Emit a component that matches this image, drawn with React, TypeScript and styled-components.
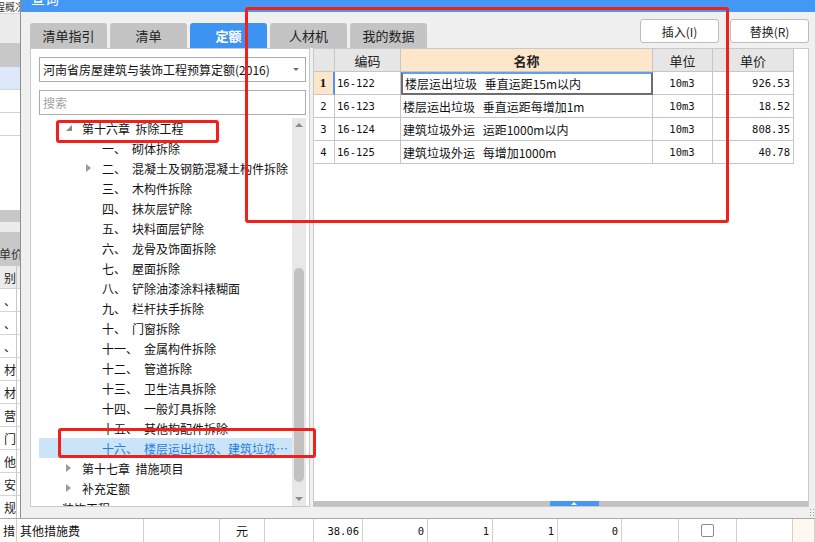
import React from "react";
import styled, { createGlobalStyle, css } from "styled-components";

const GlobalStyle = createGlobalStyle`
  html, body {
    margin: 0;
    padding: 0;
  }
  body {
    font-family: "Noto Sans CJK SC", "Noto Sans", sans-serif;
    font-size: 12px;
    color: #222;
    background: #fff;
  }
  * {
    box-sizing: border-box;
  }
`;

const Screen = styled.div`
  width: 815px;
  height: 542px;
  position: relative;
  overflow: hidden;
  display: grid;
  grid-template-columns: 20px 1fr;
  grid-template-rows: 518px 24px;
`;

/* ---- underlying app, left strip ---- */

const Strip = styled.div`
  display: flex;
  flex-direction: column;
  overflow: hidden;
  background: #fff;
`;

const tones = {
  white: "#ffffff",
  light: "#ececec",
  gray: "#c8c8c8",
  blue: "#dde9fb",
};

const StripBand = styled.div<{ $h: number; $tone: keyof typeof tones; $line?: boolean }>`
  height: ${(p) => p.$h}px;
  flex-shrink: 0;
  background: ${(p) => tones[p.$tone]};
  border-bottom: ${(p) => (p.$line ? "1px solid #d4d4d4" : "none")};
  font-size: 12px;
  line-height: ${(p) => p.$h}px;
  white-space: nowrap;
  overflow: hidden;
`;

const StripTitle = styled.span<{ $big?: boolean }>`
  display: block;
  margin-left: ${(p) => (p.$big ? -1 : -5)}px;
  font-size: ${(p) => (p.$big ? 12 : 10)}px;
  line-height: ${(p) => (p.$big ? 44 : 13)}px;
  color: #333;
`;

const StripCell = styled.div<{ $tone?: keyof typeof tones }>`
  width: 17px;
  height: 100%;
  border-right: 1px solid #c8c8c8;
  background: ${(p) => tones[p.$tone ?? "white"]};
  overflow: hidden;
  text-align: right;
  font-size: 12px;
  white-space: nowrap;
`;

/* ---- dialog ---- */

const Dialog = styled.div`
  display: flex;
  flex-direction: column;
  border-left: 1px solid #8f8f8f;
  background: #f0f0f0;
  min-width: 0;
  position: relative;
`;

const TitleBar = styled.div`
  height: 12px;
  flex-shrink: 0;
  background: #4597f5;
  overflow: hidden;
  padding-left: 10px;
`;

const TitleText = styled.span`
  display: block;
  margin-top: -9px;
  font-size: 14px;
  line-height: 15px;
  color: #fff;
`;

const Body = styled.div`
  flex: 1;
  display: flex;
  flex-direction: column;
  padding: 0 6px 0 9px;
  position: relative;
`;

const TopRow = styled.div`
  height: 36px;
  display: flex;
  justify-content: space-between;
  align-items: flex-end;
`;

const Tabs = styled.div`
  display: flex;
  gap: 3px;
`;

const Tab = styled.div<{ $active?: boolean }>`
  width: 77px;
  height: 25px;
  border-radius: 3px 3px 0 0;
  display: flex;
  align-items: center;
  justify-content: center;
  font-size: 13px;
  background: ${(p) => (p.$active ? "#3d93f2" : "#c4c4c4")};
  color: ${(p) => (p.$active ? "#fff" : "#222")};
  font-weight: ${(p) => (p.$active ? 700 : 400)};
`;

const Actions = styled.div`
  align-self: flex-start;
  margin-top: 7px;
  display: flex;
  gap: 11px;
`;

const ActionButton = styled.button`
  width: 79px;
  height: 24px;
  border: 1px solid #bcbcbc;
  border-radius: 3px;
  background: #fff;
  font-family: "Noto Sans CJK SC", sans-serif;
  font-size: 12px;
  color: #222;
  padding: 0;
`;

const Panels = styled.div`
  height: 459px;
  display: flex;
  gap: 3px;
`;

const Footer = styled.div`
  flex: 1;
  position: relative;
`;

const Grip = styled.div`
  position: absolute;
  right: -6px;
  bottom: 1px;
  width: 6px;
  height: 9px;
  background-image: radial-gradient(circle, #9a9a9a 0.8px, transparent 1px);
  background-size: 3px 3px;
`;

/* ---- tree panel ---- */

const TreePanel = styled.div`
  width: 280px;
  flex-shrink: 0;
  background: #fff;
  border: 1px solid #c9c9c9;
  display: flex;
  flex-direction: column;
  padding: 8px 3px 0 8px;
`;

const Field = styled.div<{ $placeholder?: boolean }>`
  height: 25px;
  flex-shrink: 0;
  border: 1px solid #ababab;
  display: flex;
  align-items: center;
  justify-content: space-between;
  padding: 0 6px 0 3px;
  font-size: 12px;
  color: ${(p) => (p.$placeholder ? "#a3a3a3" : "#111")};
  & + & {
    margin-top: 8px;
  }
`;

const DownCaret = styled.span`
  border-left: 3px solid transparent;
  border-right: 3px solid transparent;
  border-top: 3px solid #707070;
`;

const TreeArea = styled.div`
  margin-top: 3px;
  flex: 1;
  display: flex;
  min-height: 0;
`;

const TreeList = styled.div`
  flex: 1;
  overflow: hidden;
  min-width: 0;
`;

const TreeRow = styled.div<{ $level: number; $selected?: boolean }>`
  height: 20px;
  display: flex;
  align-items: center;
  padding-left: ${(p) => 3 + p.$level * 20}px;
  white-space: nowrap;
  font-size: 12px;
  color: ${(p) => (p.$selected ? "#1f7fe3" : "#111")};
  background: ${(p) => (p.$selected ? "#cce4f8" : "transparent")};
`;

const CaretSlot = styled.span`
  width: 20px;
  flex-shrink: 0;
  display: flex;
  align-items: center;
  padding-left: 4px;
`;

const ItemNum = styled.span`
  margin-right: 6px;
`;

const ItemText = styled.span`
  white-space: pre;
`;

const ScrollTrack = styled.div`
  width: 14px;
  flex-shrink: 0;
  background: #e8e8e8;
  display: flex;
  flex-direction: column;
  align-items: center;
`;

const ScrollArrow = styled.div<{ $dir: "up" | "down" }>`
  height: 14px;
  width: 100%;
  display: flex;
  align-items: center;
  justify-content: center;
  ${(p) =>
    p.$dir === "down" &&
    css`
      margin-top: auto;
    `}
  &::after {
    content: "";
    border-left: 4px solid transparent;
    border-right: 4px solid transparent;
    ${(p) =>
      p.$dir === "up"
        ? css`
            border-bottom: 4px solid #8c8c8c;
          `
        : css`
            border-top: 4px solid #8c8c8c;
          `}
  }
`;

const ScrollThumb = styled.div<{ $offset: number; $size: number }>`
  width: 10px;
  border-radius: 5px;
  background: #c1c1c1;
  margin-top: ${(p) => p.$offset}px;
  height: ${(p) => p.$size}px;
  flex-shrink: 0;
`;

/* ---- table panel ---- */

const TablePanel = styled.div`
  flex: 1;
  background: #fff;
  border: 1px solid #c9c9c9;
  display: flex;
  flex-direction: column;
`;

const Grid = styled.div`
  display: grid;
  grid-template-columns: 21px 66px 252px 60px 81px;
  grid-auto-rows: 23px;
`;

const HeadCell = styled.div<{ $accent?: boolean }>`
  background: ${(p) => (p.$accent ? "#fde6c9" : "#e6e6e6")};
  border-right: 1px solid #c6c6c6;
  border-bottom: 1px solid #c6c6c6;
  display: flex;
  align-items: center;
  justify-content: center;
  font-size: 13px;
  font-weight: ${(p) => (p.$accent ? 700 : 400)};
  color: #222;
`;

const Cell = styled.div<{
  $align?: "left" | "center" | "right";
  $mono?: boolean;
  $marker?: boolean;
  $focus?: boolean;
}>`
  border-right: 1px solid #c6c6c6;
  border-bottom: 1px solid #c6c6c6;
  display: flex;
  align-items: center;
  justify-content: ${(p) =>
    p.$align === "right" ? "flex-end" : p.$align === "center" ? "center" : "flex-start"};
  padding: 0 3px 0 2px;
  white-space: nowrap;
  overflow: hidden;
  font-size: 12px;
  word-spacing: 5px;
  color: #111;
  ${(p) =>
    p.$mono &&
    css`
      font-family: "DejaVu Sans Mono", "Liberation Mono", monospace;
      font-size: 10.5px;
      word-spacing: 0;
    `}
  ${(p) =>
    p.$marker &&
    css`
      background: #fde6c9;
      font-weight: 700;
      font-family: "Liberation Serif", serif;
      font-size: 13px;
      border-right: 2px solid #4a94ec;
    `}
  ${(p) =>
    p.$focus &&
    css`
      border: 2px solid #6e6e6e;
      border-top-color: #62a0ea;
    `}
`;

const Filler = styled.div`
  flex: 1;
`;

const HScroll = styled.div`
  height: 5px;
  background: #c2c2c2;
  display: flex;
  justify-content: center;
`;

const SplitHandle = styled.div`
  width: 49px;
  margin-left: 26px;
  background: #4597f5;
  display: flex;
  align-items: center;
  justify-content: center;
  &::after {
    content: "";
    border-left: 3px solid transparent;
    border-right: 3px solid transparent;
    border-bottom: 3px solid #fff;
  }
`;

/* ---- underlying app, bottom row ---- */

const BottomRow = styled.div`
  grid-column: 1 / -1;
  display: flex;
  border-top: 1px solid #a9a9a9;
  background: #fff;
`;

const BCell = styled.div<{ $w?: number; $align?: "left" | "center" | "right"; $mono?: boolean; $tint?: boolean }>`
  ${(p) =>
    p.$w
      ? css`
          width: ${p.$w}px;
          flex-shrink: 0;
        `
      : css`
          flex: 1;
        `}
  border-right: 1px solid #d0d0d0;
  background: ${(p) => (p.$tint ? "#fff8f0" : "#fff")};
  display: flex;
  align-items: center;
  justify-content: ${(p) =>
    p.$align === "right" ? "flex-end" : p.$align === "center" ? "center" : "flex-start"};
  padding: 0 3px;
  white-space: nowrap;
  overflow: hidden;
  font-size: 12px;
  color: #111;
  ${(p) =>
    p.$mono &&
    css`
      font-family: "DejaVu Sans Mono", "Liberation Mono", monospace;
      font-size: 10.5px;
    `}
`;

const CheckBox = styled.span`
  width: 13px;
  height: 13px;
  border: 1px solid #8a8a8a;
  border-radius: 2px;
  background: #fff;
`;

/* ---- annotations ---- */

const Mark = styled.div<{ $x: number; $y: number; $w: number; $h: number }>`
  position: absolute;
  left: ${(p) => p.$x}px;
  top: ${(p) => p.$y}px;
  width: ${(p) => p.$w}px;
  height: ${(p) => p.$h}px;
  border: 3px solid #f2201b;
  border-radius: 3px;
  pointer-events: none;
`;

type Caret = "open" | "closed" | undefined;

const CaretIcon = ({ kind }: { kind: Caret }) => {
  if (kind === "open")
    return (
      <svg width="6" height="6" viewBox="0 0 6 6">
        <path d="M6 0 L6 6 L0 6 Z" fill="#8a8a8a" />
      </svg>
    );
  if (kind === "closed")
    return (
      <svg width="5" height="8" viewBox="0 0 5 8">
        <path d="M0 0 L5 4 L0 8 Z" fill="#9a9a9a" />
      </svg>
    );
  return null;
};

type TreeItem = { level: number; num?: string; text: string; caret?: Caret; selected?: boolean };

const tree: TreeItem[] = [
  { level: 1, caret: "open", text: "第十六章  拆除工程" },
  { level: 2, num: "一", text: "砌体拆除" },
  { level: 2, num: "二", text: "混凝土及钢筋混凝土构件拆除", caret: "closed" },
  { level: 2, num: "三", text: "木构件拆除" },
  { level: 2, num: "四", text: "抹灰层铲除" },
  { level: 2, num: "五", text: "块料面层铲除" },
  { level: 2, num: "六", text: "龙骨及饰面拆除" },
  { level: 2, num: "七", text: "屋面拆除" },
  { level: 2, num: "八", text: "铲除油漆涂料裱糊面" },
  { level: 2, num: "九", text: "栏杆扶手拆除" },
  { level: 2, num: "十", text: "门窗拆除" },
  { level: 2, num: "十一", text: "金属构件拆除" },
  { level: 2, num: "十二", text: "管道拆除" },
  { level: 2, num: "十三", text: "卫生洁具拆除" },
  { level: 2, num: "十四", text: "一般灯具拆除" },
  { level: 2, num: "十五", text: "其他构配件拆除" },
  { level: 2, num: "十六", text: "楼层运出垃圾、建筑垃圾…", selected: true },
  { level: 1, caret: "closed", text: "第十七章  措施项目" },
  { level: 1, caret: "closed", text: "补充定额" },
  { level: 0, text: "装饰工程" },
];

const rows = [
  { code: "16-122", name: "楼层运出垃圾 垂直运距15m以内", unit: "10m3", price: "926.53" },
  { code: "16-123", name: "楼层运出垃圾 垂直运距每增加1m", unit: "10m3", price: "18.52" },
  { code: "16-124", name: "建筑垃圾外运 运距1000m以内", unit: "10m3", price: "808.35" },
  { code: "16-125", name: "建筑垃圾外运 每增加1000m", unit: "10m3", price: "40.78" },
];

const stripRows = ["、", "、", "、", "材", "材", "营", "门", "他", "安", "规"];

export default function App() {
  return (
    <>
      <GlobalStyle />
      <Screen>
        <Strip>
          <StripBand $h={14} $tone="white" $line>
            <StripTitle>程概况</StripTitle>
          </StripBand>
          <StripBand $h={29} $tone="light" />
          <StripBand $h={24} $tone="gray" />
          <StripBand $h={23} $tone="blue" $line />
          <StripBand $h={23} $tone="white" $line />
          <StripBand $h={23} $tone="white" $line />
          <StripBand $h={74} $tone="white" />
          <StripBand $h={12} $tone="gray" />
          <StripBand $h={10} $tone="light" />
          <StripBand $h={34} $tone="gray">
            <StripTitle $big>单价</StripTitle>
          </StripBand>
          <StripBand $h={23} $tone="light" $line>
            <StripCell $tone="light">别</StripCell>
          </StripBand>
          {stripRows.map((c, i) => (
            <StripBand key={i} $h={23} $tone="white" $line>
              <StripCell>{c}</StripCell>
            </StripBand>
          ))}
        </Strip>

        <Dialog>
          <TitleBar>
            <TitleText>查询</TitleText>
          </TitleBar>
          <Body>
            <TopRow>
              <Tabs>
                <Tab>清单指引</Tab>
                <Tab>清单</Tab>
                <Tab $active>定额</Tab>
                <Tab>人材机</Tab>
                <Tab>我的数据</Tab>
              </Tabs>
              <Actions>
                <ActionButton>插入(I)</ActionButton>
                <ActionButton>替换(R)</ActionButton>
              </Actions>
            </TopRow>

            <Panels>
              <TreePanel>
                <Field>
                  <span>河南省房屋建筑与装饰工程预算定额(2016)</span>
                  <DownCaret />
                </Field>
                <Field $placeholder>搜索</Field>
                <TreeArea>
                  <TreeList>
                    {tree.map((t, i) => (
                      <TreeRow key={i} $level={t.level} $selected={t.selected}>
                        <CaretSlot>
                          <CaretIcon kind={t.caret} />
                        </CaretSlot>
                        {t.num && <ItemNum>{t.num}、</ItemNum>}
                        <ItemText>{t.text}</ItemText>
                      </TreeRow>
                    ))}
                  </TreeList>
                  <ScrollTrack>
                    <ScrollArrow $dir="up" />
                    <ScrollThumb $offset={136} $size={214} />
                    <ScrollArrow $dir="down" />
                  </ScrollTrack>
                </TreeArea>
              </TreePanel>

              <TablePanel>
                <Grid>
                  <HeadCell />
                  <HeadCell>编码</HeadCell>
                  <HeadCell $accent>名称</HeadCell>
                  <HeadCell>单位</HeadCell>
                  <HeadCell>单价</HeadCell>
                  {rows.map((r, i) => (
                    <React.Fragment key={r.code}>
                      <Cell $align="center" $marker={i === 0} $mono={i !== 0}>
                        {i + 1}
                      </Cell>
                      <Cell $mono>{r.code}</Cell>
                      <Cell $focus={i === 0}>{r.name}</Cell>
                      <Cell $align="center" $mono>
                        {r.unit}
                      </Cell>
                      <Cell $align="right" $mono>
                        {r.price}
                      </Cell>
                    </React.Fragment>
                  ))}
                </Grid>
                <Filler />
                <HScroll>
                  <SplitHandle />
                </HScroll>
              </TablePanel>
            </Panels>

            <Footer>
              <Grip />
            </Footer>
          </Body>
        </Dialog>

        <BottomRow>
          <BCell $w={17}>措</BCell>
          <BCell $w={127}>其他措施费</BCell>
          <BCell $w={76} />
          <BCell $w={45} $align="center">
            元
          </BCell>
          <BCell $w={49} />
          <BCell $w={49} $align="right" $mono>
            38.06
          </BCell>
          <BCell $w={65} $align="right" $mono>
            0
          </BCell>
          <BCell $w={65} $align="right" $mono>
            1
          </BCell>
          <BCell $w={65} $align="right" $mono>
            1
          </BCell>
          <BCell $w={64} $align="right" $mono>
            0
          </BCell>
          <BCell $w={57} />
          <BCell $w={58} $align="center">
            <CheckBox />
          </BCell>
          <BCell $w={56} />
          <BCell $tint />
        </BottomRow>

        <Mark $x={245} $y={7} $w={484} $h={216} />
        <Mark $x={56} $y={120} $w={163} $h={23} />
        <Mark $x={58} $y={428} $w={258} $h={30} />
      </Screen>
    </>
  );
}
